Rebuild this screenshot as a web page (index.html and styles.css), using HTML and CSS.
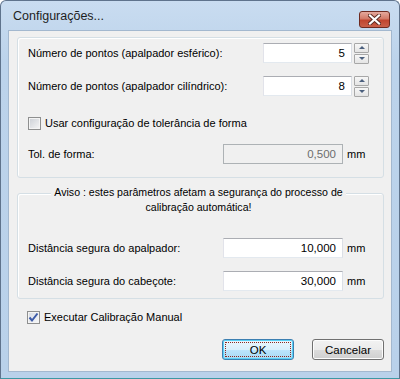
FILE: index.html
```html
<!DOCTYPE html>
<html lang="pt">
<head>
    <meta charset="UTF-8">
    <title>Configurações...</title>
    <link rel="stylesheet" href="styles.css">
</head>
<body>
    <div class="window">
        <div class="titlebar">
            <span class="title">Configurações...</span>
            <span class="close">
                <svg width="13" height="11" viewBox="0 0 13 11">
                    <path d="M2 1.5 L11 9.5 M11 1.5 L2 9.5" stroke="#5a2a22" stroke-width="4" stroke-linecap="square"/>
                    <path d="M2 1.5 L11 9.5 M11 1.5 L2 9.5" stroke="#ffffff" stroke-width="2.2" stroke-linecap="square"/>
                </svg>
            </span>
        </div>

        <div class="client">
            <div class="group group-points">
                <div class="row">
                    <span class="label">Número de pontos (apalpador esférico):</span>
                    <div class="spin">
                        <span class="field">5</span>
                        <span class="spin-btns">
                            <span class="spin-btn up"></span>
                            <span class="spin-btn down"></span>
                        </span>
                    </div>
                </div>
                <div class="row row-gap">
                    <span class="label">Número de pontos (apalpador cilíndrico):</span>
                    <div class="spin">
                        <span class="field">8</span>
                        <span class="spin-btns">
                            <span class="spin-btn up"></span>
                            <span class="spin-btn down"></span>
                        </span>
                    </div>
                </div>
                <div class="check check-tol">
                    <span class="box"></span>
                    <span>Usar configuração de tolerância de forma</span>
                </div>
                <div class="row row-tol">
                    <span class="label">Tol. de forma:</span>
                    <span class="field field-unit disabled">0,500</span>
                    <span class="unit">mm</span>
                </div>
            </div>

            <div class="group group-warn">
                <div class="legend">Aviso : estes parâmetros afetam a segurança do processo de<br>calibração automática!</div>
                <div class="row row-first">
                    <span class="label">Distância segura do apalpador:</span>
                    <span class="field field-unit">10,000</span>
                    <span class="unit">mm</span>
                </div>
                <div class="row row-gap">
                    <span class="label">Distância segura do cabeçote:</span>
                    <span class="field field-unit">30,000</span>
                    <span class="unit">mm</span>
                </div>
            </div>

            <div class="check check-manual">
                <span class="box checked">
                    <svg width="11" height="11" viewBox="0 0 11 11">
                        <path d="M1.5 5.5 L4 8.5 L9.5 1.5" fill="none" stroke="#3c5aa8" stroke-width="2"/>
                    </svg>
                </span>
                <span>Executar Calibração Manual</span>
            </div>

            <div class="buttons">
                <span class="btn btn-default"><span class="focus">OK</span></span>
                <span class="btn">Cancelar</span>
            </div>
        </div>
    </div>
</body>
</html>
```

FILE: styles.css
```css
body {
    margin: 0;
    font-family: "Liberation Sans", Arial, sans-serif;
    font-size: 11px;
    color: #000;
    background: #fff;
}
.window {
    width: 400px;
    height: 379px;
    box-sizing: border-box;
    border: 1px solid #5f738c;
    border-bottom-color: #3d98a3;
    border-radius: 6px 6px 0 0;
    background: linear-gradient(#c9dcf0, #bcd3eb 60px, #b9d1ea);
    padding: 0 7px 6px 7px;
    display: flex;
    flex-direction: column;
}
.titlebar {
    height: 29px;
    display: flex;
    align-items: center;
    padding-left: 5px;
}
.title {
    font-size: 12.5px;
    color: #1e1e1e;
    margin-top: 1px;
}
.close {
    margin-left: auto;
    margin-right: 2px;
    width: 29px;
    height: 15px;
    border: 1px solid #6e2a20;
    border-radius: 3px;
    background: linear-gradient(#e4a99d, #d27a68 45%, #c0452f 55%, #c9604a);
    display: flex;
    align-items: center;
    justify-content: center;
    margin-top: 7px;
}
.client {
    flex: 1;
    background: #f0f0f0;
    border: 1px solid #a3b8cf;
    padding: 6px 7px 0 8px;
}

/* group boxes */
.group {
    border: 1px solid #d5dfe5;
    border-radius: 3px;
    padding: 0 14px 0 10px;
    box-shadow: inset 1px 1px 0 #fff;
}
.group-points {
    padding-top: 5px;
    padding-bottom: 13px;
}
.group-warn {
    margin-top: 15px;
    padding-bottom: 7px;
}
.legend {
    width: max-content;
    margin: -9px auto 0 auto;
    padding: 0 3px;
    background: #f0f0f0;
    text-align: center;
    line-height: 15px;
    font-size: 10.6px;
}

/* rows */
.row {
    display: flex;
    align-items: center;
    height: 20px;
}
.row-gap {
    margin-top: 13px;
}
.row-tol {
    margin-top: 11px;
}
.row-first {
    margin-top: 23px;
}
.label {
    flex: 1;
}
.field {
    box-sizing: border-box;
    height: 20px;
    line-height: 18px;
    border: 1px solid #abadb3;
    border-color: #abadb3 #dbdfe6 #e3e9ef #e2e3ea;
    background: #fff;
    text-align: right;
    padding: 0 6px;
    font-size: 11.5px;
}
.field.disabled {
    background: #f0f0f0;
    border-color: #adb2b5;
    color: #6d6d6d;
}
.field-unit {
    width: 120px;
}
.unit {
    width: 22px;
    margin-left: 4px;
}
.spin {
    display: flex;
    gap: 2px;
}
.spin .field {
    width: 89px;
}
.spin-btns {
    display: flex;
    flex-direction: column;
    gap: 1px;
}
.spin-btn {
    box-sizing: border-box;
    width: 15px;
    height: 10px;
    border: 1px solid #a7a7a7;
    border-radius: 1px;
    background: linear-gradient(#f7f7f7, #e4e4e4);
    display: flex;
    align-items: center;
    justify-content: center;
}
.spin-btn::after {
    content: "";
    border-left: 3px solid transparent;
    border-right: 3px solid transparent;
}
.spin-btn.up::after {
    border-bottom: 3px solid #4c607e;
}
.spin-btn.down::after {
    border-top: 3px solid #4c607e;
}

/* checkboxes */
.check {
    display: flex;
    align-items: center;
    gap: 4px;
    height: 20px;
}
.check-tol {
    margin-top: 17px;
}
.check-manual {
    margin-top: 8px;
    padding-left: 10px;
}
.box {
    box-sizing: border-box;
    width: 13px;
    height: 13px;
    border: 1px solid #8e8f8f;
    background: linear-gradient(135deg, #cbcfd5, #f6f6f6);
    box-shadow: inset 0 0 0 1px #f4f4f4;
    display: flex;
    align-items: center;
    justify-content: center;
}
.box.checked {
    background: linear-gradient(135deg, #d6dbe4, #f7f8fa);
}

/* buttons */
.buttons {
    display: flex;
    justify-content: flex-end;
    gap: 18px;
    margin-top: 12px;
}
.btn {
    box-sizing: border-box;
    width: 72px;
    height: 21px;
    border: 1px solid #707070;
    border-radius: 3px;
    background: linear-gradient(#f2f2f2, #ebebeb 50%, #dddddd 50%, #cfcfcf);
    display: flex;
    align-items: center;
    justify-content: center;
    box-shadow: inset 0 0 0 1px #fcfcfc;
    font-size: 11.5px;
}
.btn-default {
    border-color: #3c7fb1;
    background: linear-gradient(#eaf6fd, #d9f0fc 50%, #bee6fd 50%, #a7d9f5);
    box-shadow: inset 0 0 0 1px #5ad0f5;
    padding: 2px;
}
.focus {
    flex: 1;
    align-self: stretch;
    display: flex;
    align-items: center;
    justify-content: center;
    border: 1px dotted #8a2b20;
}
```
